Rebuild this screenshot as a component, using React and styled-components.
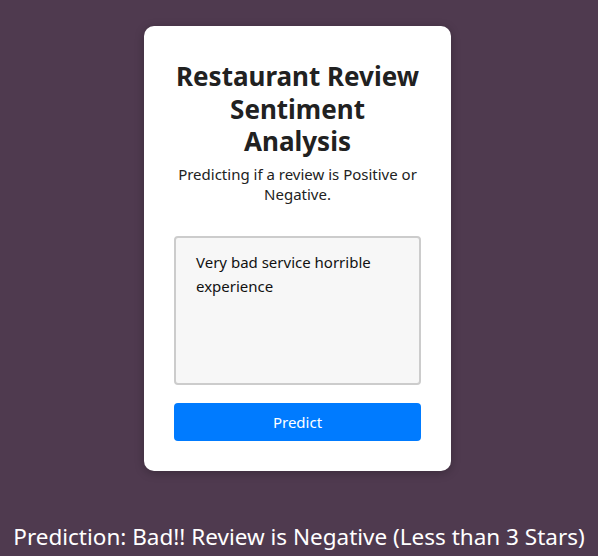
import styled, { createGlobalStyle } from "styled-components"

const GlobalStyle = createGlobalStyle`
    html, body {
        margin: 0;
        padding: 0;
        background: #4f3a4f;
        font-family: "Noto Sans", "Open Sans", sans-serif;
    }
`

function App() {
    return (
        <Page>
            <GlobalStyle />
            <Card>
                <Title>
                    Restaurant Review
                    <br />
                    Sentiment
                    <br />
                    Analysis
                </Title>
                <Subtitle>Predicting if a review is Positive or Negative.</Subtitle>
                <Form onSubmit={(e) => e.preventDefault()}>
                    <ReviewInput defaultValue="Very bad service horrible experience" />
                    <PredictButton type="submit">Predict</PredictButton>
                </Form>
            </Card>
            <Result>Prediction: Bad!! Review is Negative (Less than 3 Stars)</Result>
        </Page>
    )
}

const Page = styled.div`
    min-height: 556px;
    display: flex;
    flex-direction: column;
    align-items: center;
    padding-top: 26px;
    box-sizing: border-box;
`

const Card = styled.div`
    width: 307px;
    box-sizing: border-box;
    margin-right: 3px;
    padding: 30px;
    background: #ffffff;
    border-radius: 10px;
    box-shadow: 0 2px 10px rgba(0, 0, 0, 0.25);
    text-align: center;
`

const Title = styled.h1`
    margin: 4px 0 6px;
    font-size: 26px;
    line-height: 32.5px;
    font-weight: 700;
    color: #212121;
`

const Subtitle = styled.p`
    margin: 0;
    font-size: 15px;
    line-height: 20px;
    color: #222;
`

const Form = styled.form`
    display: flex;
    flex-direction: column;
    gap: 18px;
    margin-top: 32px;
`

const ReviewInput = styled.textarea`
    height: 149px;
    box-sizing: border-box;
    padding: 12px 20px;
    resize: none;
    background: #f7f7f7;
    border: 2px solid #cccccc;
    border-radius: 4px;
    font-family: inherit;
    font-size: 15px;
    line-height: 24px;
    color: #111;
    outline: none;
`

const PredictButton = styled.button`
    height: 38px;
    border: none;
    border-radius: 4px;
    background: #007bff;
    color: #ffffff;
    font-family: inherit;
    font-size: 15px;
    cursor: pointer;
`

const Result = styled.div`
    margin-top: 51px;
    font-size: 22.5px;
    line-height: 30px;
    color: #ffffff;
    white-space: nowrap;
`

export default App
